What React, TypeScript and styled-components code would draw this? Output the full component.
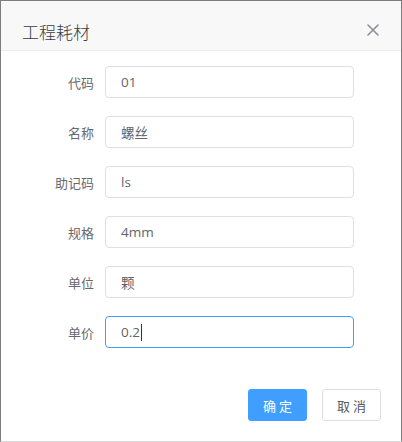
import React from 'react';
import styled, { createGlobalStyle } from 'styled-components';

const GlobalStyle = createGlobalStyle`
  html, body {
    margin: 0;
    padding: 0;
    background: #ffffff;
  }
  body {
    font-family: "Open Sans", "Noto Sans CJK SC", sans-serif;
  }
`;

const fields = [
  { label: '代码', value: '01' },
  { label: '名称', value: '螺丝' },
  { label: '助记码', value: 'ls' },
  { label: '规格', value: '4mm' },
  { label: '单位', value: '颗' },
  { label: '单价', value: '0.2', focused: true },
];

function App() {
  return (
    <>
      <GlobalStyle />
      <SDialog>
        <SHeader>
          <STitle>工程耗材</STitle>
          <SClose aria-label="关闭">
            <svg width="12" height="12" viewBox="0 0 12 12">
              <path d="M1 1 L11 11 M11 1 L1 11" stroke="#8a8f97" strokeWidth="1.6" strokeLinecap="round" />
            </svg>
          </SClose>
        </SHeader>
        <SForm>
          {fields.map((f) => (
            <SRow key={f.label}>
              <SLabel>{f.label}</SLabel>
              <SInput focused={!!f.focused}>
                {f.value}
                {f.focused && <SCaret />}
              </SInput>
            </SRow>
          ))}
        </SForm>
        <SFooter>
          <SButton primary>确 定</SButton>
          <SButton>取 消</SButton>
        </SFooter>
      </SDialog>
    </>
  );
}

const SDialog = styled.div`
  box-sizing: border-box;
  width: 402px;
  height: 442px;
  border: 1px solid #7d7d7d;
  border-bottom-color: #d8d8d8;
  background: #ffffff;
  display: flex;
  flex-direction: column;
`;

const SHeader = styled.div`
  box-sizing: border-box;
  height: 50px;
  padding: 0 20px 0 21px;
  background: #f8f8f8;
  border-bottom: 1px solid #ececec;
  display: flex;
  align-items: center;
  justify-content: space-between;
`;

const STitle = styled.div`
  font-family: "Noto Sans CJK SC", sans-serif;
  font-weight: 300;
  font-size: 17px;
  color: #3a3a3a;
  padding-top: 12px;
`;

const SClose = styled.div`
  width: 16px;
  height: 16px;
  display: flex;
  align-items: center;
  justify-content: center;
  padding-top: 8px;
`;

const SForm = styled.div`
  padding-top: 15px;
  display: flex;
  flex-direction: column;
  gap: 18px;
`;

const SRow = styled.div`
  display: flex;
  align-items: center;
  height: 32px;
`;

const SLabel = styled.div`
  box-sizing: border-box;
  width: 104px;
  padding-right: 11px;
  text-align: right;
  font-family: "Noto Sans CJK SC", sans-serif;
  font-size: 13px;
  color: #666a70;
`;

const SInput = styled.div<{ focused: boolean }>`
  box-sizing: border-box;
  width: 249px;
  height: 32px;
  padding-left: 15px;
  display: flex;
  align-items: center;
  border: 1px solid ${({ focused }) => (focused ? '#4a9ee8' : '#dcdfe6')};
  border-radius: 4px;
  font-family: "Open Sans", "Noto Sans CJK SC", sans-serif;
  font-size: 13.5px;
  color: #5f636a;
`;

const SCaret = styled.span`
  display: inline-block;
  width: 1px;
  height: 17px;
  background: #333333;
  margin-left: 1px;
`;

const SFooter = styled.div`
  margin-top: 41px;
  padding-right: 20px;
  display: flex;
  justify-content: flex-end;
  gap: 15px;
`;

const SButton = styled.div<{ primary?: boolean }>`
  box-sizing: border-box;
  width: 59px;
  height: 32px;
  display: flex;
  align-items: center;
  justify-content: center;
  border-radius: 3px;
  border: 1px solid ${({ primary }) => (primary ? '#409eff' : '#dcdfe6')};
  background: ${({ primary }) => (primary ? '#409eff' : '#ffffff')};
  color: ${({ primary }) => (primary ? '#ffffff' : '#555a61')};
  font-family: "Noto Sans CJK SC", sans-serif;
  font-size: 13px;
  white-space: pre;
`;

export default App;
